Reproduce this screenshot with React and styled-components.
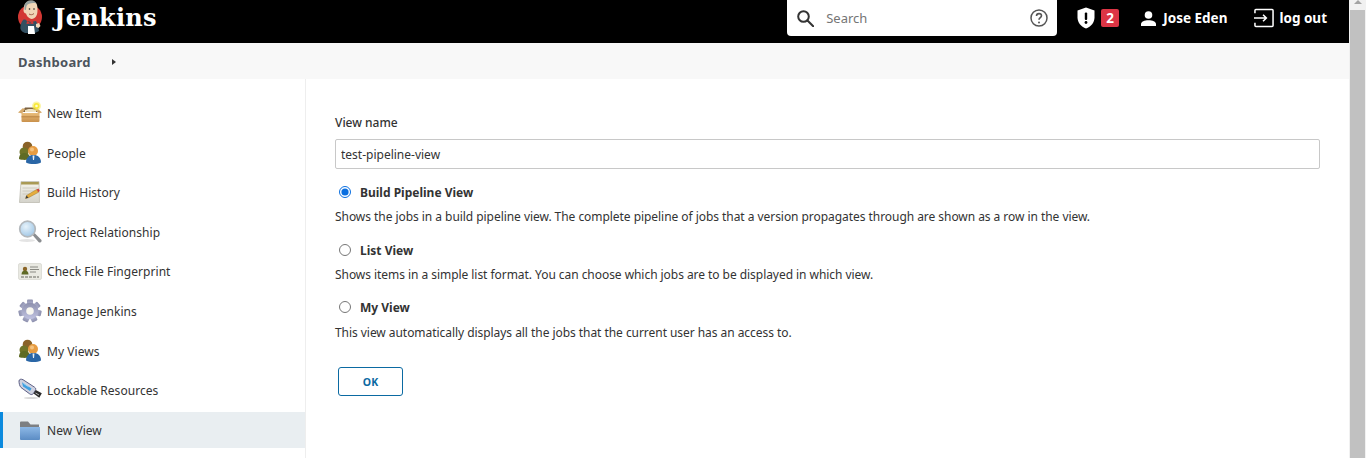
import React from 'react'
import styled, { createGlobalStyle } from 'styled-components'

const GlobalStyle = createGlobalStyle`
  html, body { margin: 0; padding: 0; height: 458px; overflow: hidden; background: #fff; }
  body { font-family: "Noto Sans", "Open Sans", sans-serif; color: #333; }
`

const Page = styled.div`
  display: flex;
  height: 458px;
  overflow: hidden;
`
const Main = styled.div`
  flex: 1;
  min-width: 0;
  display: flex;
  flex-direction: column;
`
const ScrollTrack = styled.div`
  width: 17px;
  background: #f1f1f1;
  display: flex;
  flex-direction: column;
  align-items: center;
`
const ScrollArrow = styled.div`
  width: 0;
  height: 0;
  margin: 0 0 6px;
  border-left: 4px solid transparent;
  border-right: 4px solid transparent;
  border-bottom: 4px solid #a3a3a3;
`
const ScrollThumb = styled.div`
  width: 15px;
  flex: 1;
  background: #c1c1c1;
`

const Header = styled.header`
  height: 43px;
  background: #000;
  color: #fff;
  display: flex;
  align-items: flex-start;
  padding-left: 16px;
`
const Brand = styled.a`
  display: flex;
  align-items: center;
  height: 35px;
  gap: 10px;
  margin-right: auto;
`
const BrandName = styled.span`
  font-family: "DejaVu Serif", "Liberation Serif", serif;
  font-weight: 700;
  font-size: 24px;
  letter-spacing: 0.3px;
  line-height: 35px;
`
const SearchBox = styled.div`
  width: 270px;
  height: 36px;
  background: #fff;
  border-radius: 0 0 4px 4px;
  display: flex;
  align-items: center;
  padding: 0 9px 0 10px;
  box-sizing: border-box;
  color: #333;
  margin-right: 20px;
`
const SearchText = styled.span`
  flex: 1;
  margin-left: 12px;
  font-size: 13px;
  color: #757575;
`
const HeaderItem = styled.div`
  display: flex;
  align-items: center;
  height: 36px;
  font-size: 13.5px;
  font-weight: 700;
  margin-right: ${p => p.$after}px;
  gap: ${p => p.$gap}px;
`
const Badge = styled.span`
  width: 18px;
  height: 18px;
  border-radius: 2px;
  background: #dc3545;
  color: #fff;
  font-size: 13.5px;
  font-weight: 700;
  display: flex;
  align-items: center;
  justify-content: center;
`

const Breadcrumb = styled.nav`
  height: 36px;
  box-sizing: border-box;
  background: #f8f8f8;
  display: flex;
  align-items: center;
  padding: 1px 0 0 18px;
  gap: 21px;
`
const Crumb = styled.a`
  font-size: 13px;
  font-weight: 700;
  letter-spacing: 0.3px;
  color: #4d545d;
`
const CrumbArrow = styled.span`
  width: 0;
  height: 0;
  border-top: 3.5px solid transparent;
  border-bottom: 3.5px solid transparent;
  border-left: 4px solid #333;
`

const Body = styled.div`
  flex: 1;
  display: flex;
  min-height: 0;
`
const Side = styled.aside`
  width: 305px;
  flex: none;
  border-right: 1px solid #eee;
  padding-top: 16px;
  display: flex;
  flex-direction: column;
  gap: 3.6px;
`
const SideItem = styled.a`
  height: 36px;
  flex: none;
  display: flex;
  align-items: center;
  gap: 5px;
  padding-left: ${p => (p.$active ? 15 : 18)}px;
  font-size: 12px;
  letter-spacing: 0.05px;
  color: #333;
  background: ${p => (p.$active ? '#e9eef1' : 'transparent')};
  border-left: ${p => (p.$active ? '3px solid #0b8ade' : '0')};
`
const SideLabel = styled.span`
  padding-top: 1px;
`

const Content = styled.form`
  flex: 1;
  min-width: 0;
  padding: 35px 29px 0 29px;
  display: flex;
  flex-direction: column;
`
const FieldLabel = styled.label`
  font-size: 12px;
  font-weight: 500;
  line-height: 18px;
  margin-bottom: 7px;
`
const TextInput = styled.input`
  height: 30px;
  box-sizing: border-box;
  border: 1px solid #c8c8c8;
  border-radius: 2px;
  padding: 1px 5px 0;
  font: 12px "Noto Sans", sans-serif;
  color: #333;
  outline: none;
  margin-bottom: 12px;
`
const RadioRow = styled.label`
  display: flex;
  align-items: center;
  height: 22px;
  padding-left: 4px;
  gap: 9px;
  font-size: 12px;
  font-weight: 700;
`
const Radio = styled.input`
  margin: 0;
  width: 12px;
  height: 12px;
  accent-color: #0b6fe0;
`
const Description = styled.p`
  margin: ${p => p.$before}px 0 ${p => p.$after}px;
  font-size: 12px;
  letter-spacing: -0.05px;
  line-height: 18px;
  color: #333;
`
const OkButton = styled.button`
  align-self: flex-start;
  margin: 25px 0 0 3px;
  width: 65px;
  height: 29px;
  background: #fff;
  border: 1px solid #0b6aa2;
  border-radius: 3px;
  color: #0b6aa2;
  font: 700 10.5px "Noto Sans", sans-serif;
`

const IconBox = styled.svg`
  width: 24px;
  height: 24px;
  flex: none;
`

const JenkinsLogo = () => (
  <svg width="28" height="35" viewBox="0 0 28 35">
    <circle cx="14" cy="17" r="12" fill="#d33833" />
    <path d="M8 6c1-4 4-6 8-5.500 4 .5 5.500 4 5.500 8 0 3 0 6-1.500 8-1.500 2-4 3-6 2-2-1-3.500-3-4-5-1.500 0-2.500-1.500-2.500-3S8 8 8 6z" fill="#f0d6b7" />
    <path d="M8.500 5c1-3 4-5 7.500-4.500 2 .2 3.500 1.500 4.500 3C17 2.500 12 3 10.500 6c-.3 1.500-.5 3-.5 4-.5-.3-1.200-.5-1.500-.5z" fill="#49728b" opacity=".55" />
    <path d="M7 20c2-1 3 0 4 1l4 1 5-1 2 4 1 6-4 2H9c-2-1-4-2-4.500-4S5 22 7 20z" fill="#335061" />
    <path d="M11 21l3 2 3-2 .5 3-3.500-.5-3.500.5z" fill="#d33833" />
    <path d="M12 26h6l1 8h-7z" fill="#fff" />
    <path d="M20 24l3-1 1.500 3-2 2-2.500-1z" fill="#f0d6b7" />
    <path d="M13 14c1.500 1 3.500 1 5-.5" stroke="#a0604a" strokeWidth="1" fill="none" />
    <circle cx="13.500" cy="9" r=".8" fill="#222" />
    <circle cx="18" cy="9" r=".8" fill="#222" />
  </svg>
)

const SearchIcon = () => (
  <svg width="17" height="17" viewBox="0 0 17 17" fill="none" stroke="#333" strokeWidth="2">
    <circle cx="6.500" cy="6.500" r="5.300" />
    <path d="M10.500 10.500l5.700 5.700" strokeLinecap="round" />
  </svg>
)

const HelpIcon = () => (
  <svg width="18" height="18" viewBox="0 0 18 18" fill="none" stroke="#555" strokeWidth="1.500">
    <circle cx="9" cy="9" r="8" />
    <path d="M6.500 7c0-1.500 1.100-2.400 2.500-2.400s2.500.9 2.500 2.200c0 1.800-2.500 1.900-2.500 4" strokeWidth="1.600" />
    <circle cx="9" cy="13.500" r="1" fill="#555" stroke="none" />
  </svg>
)

const ShieldIcon = () => (
  <svg width="18" height="22" viewBox="0 0 18 22">
    <path d="M9 .5l8.500 3v7c0 5-3.500 9-8.500 11C4 19.500.500 15.500.500 10.500v-7z" fill="#fff" />
    <rect x="7.800" y="5.500" width="2.400" height="7.500" rx="1" fill="#000" />
    <circle cx="9" cy="15.500" r="1.400" fill="#000" />
  </svg>
)

const PersonIcon = () => (
  <svg width="15" height="15" viewBox="0 0 15 15" fill="#fff">
    <circle cx="7.500" cy="4" r="3.800" />
    <path d="M0 15v-2c0-2.500 3.500-3.800 7.500-3.800S15 10.500 15 13v2z" />
  </svg>
)

const LogoutIcon = () => (
  <svg width="20" height="20" viewBox="0 0 21 20" fill="none" stroke="#fff" strokeWidth="1.600">
    <path d="M1 5V2a1 1 0 0 1 1-1h17a1 1 0 0 1 1 1v16a1 1 0 0 1-1 1H2a1 1 0 0 1-1-1v-3" />
    <path d="M0 10h13M9.500 6.500L13 10l-3.500 3.500" />
  </svg>
)

const BoxIcon = () => (
  <IconBox viewBox="0 0 24 24">
    <defs>
      <linearGradient id="boxFront" x1="0" y1="0" x2="0" y2="1">
        <stop offset="0" stopColor="#e9bd7c" />
        <stop offset="1" stopColor="#c9914b" />
      </linearGradient>
    </defs>
    <path d="M4 11l3-4.500h11l3 4.500z" fill="#7d6240" />
    <path d="M7 9c3-1.500 8-1.500 11 0v2H7z" fill="#efe3c4" />
    <path d="M3.500 12h18v8a1 1 0 0 1-1 1h-16a1 1 0 0 1-1-1z" fill="url(#boxFront)" />
    <path d="M0 11.500L5 7l2 1.500L4 12.500z" fill="#d7aa6a" />
    <path d="M24 11.500L19 7l-2 1.500L20.500 12.500z" fill="#d7aa6a" />
    <path d="M3.500 15h18v1.500h-18z" fill="#b98443" opacity=".7" />
    <circle cx="18.500" cy="5" r="4.500" fill="#f9ec5d" opacity=".55" />
    <circle cx="18.500" cy="5" r="3" fill="#f8e93a" />
    <circle cx="18.500" cy="5" r="1.300" fill="#fffbd0" />
  </IconBox>
)

const PeopleIcon = () => (
  <IconBox viewBox="0 0 24 24">
    <circle cx="9.500" cy="5.500" r="4.800" fill="#8a6228" />
    <circle cx="6" cy="11" r="4.500" fill="#6f7428" />
    <path d="M1 18c0-4 2-6 5.500-6s5.500 2 5.500 6c-3 1.200-8 1.200-11 0z" fill="#5f6b24" />
    <circle cx="15" cy="10" r="5" fill="#e79c42" />
    <circle cx="14" cy="8.500" r="2" fill="#f4c27e" />
    <path d="M8 21.500c0-5 3-7.500 7.500-7.500s7.500 2.500 7.500 7.500c-4 2-11 2-15 0z" fill="#2a66a6" />
    <path d="M14.500 14.500h2l-.5 4.500h-1z" fill="#e9eef3" />
  </IconBox>
)

const NotepadIcon = () => (
  <IconBox viewBox="0 0 24 24">
    <defs>
      <linearGradient id="padFace" x1="0" y1="0" x2="0" y2="1">
        <stop offset="0" stopColor="#f6f5ee" />
        <stop offset="1" stopColor="#d4d3cb" />
      </linearGradient>
    </defs>
    <path d="M3 1.500h18l.5 21h-20z" fill="url(#padFace)" stroke="#b8b6aa" strokeWidth=".7" />
    <path d="M3.200 2h17.600v2.600H3z" fill="#a99a55" />
    <path d="M4.500 8h15M4.500 11h15M4.500 14h8" stroke="#c6c4b8" strokeWidth=".8" />
    <path d="M7.500 18.500l1-3L18.500 9.500l2 2.800-10 5.400z" fill="#e6ad3e" stroke="#8a6a22" strokeWidth=".4" />
    <path d="M18.500 9.500l2-1 1.200 2.200-1.200 1.600z" fill="#cf3f38" />
    <path d="M7.500 18.500l1-3 2 2.200z" fill="#3d3d3d" />
  </IconBox>
)

const MagnifierIcon = () => (
  <IconBox viewBox="0 0 24 24">
    <defs>
      <radialGradient id="lens" cx=".4" cy=".35" r=".8">
        <stop offset="0" stopColor="#e7f3fb" />
        <stop offset="1" stopColor="#94bfe2" />
      </radialGradient>
    </defs>
    <path d="M14.500 15l2-2 6.500 6.500a1.500 1.500 0 0 1-2.500 2.500z" fill="#8a8d90" />
    <circle cx="9.500" cy="9" r="7.800" fill="url(#lens)" stroke="#b3b8bc" strokeWidth="1.700" />
    <ellipse cx="9" cy="20.500" rx="8" ry="1.500" fill="#e4e4e4" />
  </IconBox>
)

const FingerprintIcon = () => (
  <IconBox viewBox="0 0 24 24">
    <rect x="0.500" y="4.500" width="23" height="16" rx="1.500" fill="#e9e9e2" stroke="#cfcfc8" strokeWidth=".6" />
    <circle cx="7" cy="10" r="2.200" fill="#8a6426" />
    <path d="M3.500 15.500c0-2.500 1.500-4 3.500-4s3.500 1.500 3.500 4z" fill="#5f6a26" />
    <path d="M12 8h8M12 10.500h9M12 13h6" stroke="#7f7f78" strokeWidth=".9" />
    <path d="M3 18h18" stroke="#66665f" strokeWidth="1" strokeDasharray="3 1" />
  </IconBox>
)

const GearIcon = () => (
  <IconBox viewBox="0 0 24 24">
    <defs>
      <linearGradient id="gearFace" x1="0" y1="0" x2="0" y2="1">
        <stop offset="0" stopColor="#8d90ad" />
        <stop offset="1" stopColor="#c1c3e2" />
      </linearGradient>
    </defs>
    <g fill="url(#gearFace)">
      {[0, 51, 103, 154, 206, 257, 309].map(a => (
        <rect key={a} x="9" y="0.500" width="6" height="7" rx="1" transform={`rotate(${a} 12 12)`} />
      ))}
    </g>
    <circle cx="12" cy="12" r="8.300" fill="url(#gearFace)" />
    <circle cx="12" cy="12" r="3.800" fill="#f8f7f0" />
  </IconBox>
)

const UsbIcon = () => (
  <IconBox viewBox="0 0 24 24">
    <path d="M1 3c0-1.700 2-2.300 4-1.300l11.500 7.500c1.500 1 1.500 2 .8 3.300l-1.800 2.800c-1 1.600-2.300 1.600-3.800.6L3 9.500C1.500 8 1 5 1 3z" fill="#cfd2e0" stroke="#4d4f78" strokeWidth=".9" />
    <path d="M4 4.200l9.500 6.300-1.500 2.500L5 8.500z" fill="#3f9fe0" />
    <path d="M5.500 5.500l5 3.200" stroke="#a8dcf7" strokeWidth=".8" />
    <path d="M15.500 15.500l2.300-3.500 6 3.300-2.500 4.400z" fill="#2b2b2b" />
    <path d="M17.500 15l3.500 2" stroke="#ddd" strokeWidth=".8" />
    <ellipse cx="13" cy="20" rx="7" ry="1" fill="#d9d9d9" />
  </IconBox>
)

const FolderIcon = () => (
  <IconBox viewBox="0 0 24 24">
    <defs>
      <linearGradient id="folderFace" x1="0" y1="0" x2="0" y2="1">
        <stop offset="0" stopColor="#8db8e6" />
        <stop offset="1" stopColor="#5b8cc4" />
      </linearGradient>
    </defs>
    <path d="M2 4.500a1 1 0 0 1 1-1h7l2.500 3H21v5H2z" fill="#7d7f82" />
    <path d="M2 9h20v12a1 1 0 0 1-1 1H3a1 1 0 0 1-1-1z" fill="url(#folderFace)" />
  </IconBox>
)

const items = [
  ['New Item', BoxIcon],
  ['People', PeopleIcon],
  ['Build History', NotepadIcon],
  ['Project Relationship', MagnifierIcon],
  ['Check File Fingerprint', FingerprintIcon],
  ['Manage Jenkins', GearIcon],
  ['My Views', PeopleIcon],
  ['Lockable Resources', UsbIcon],
  ['New View', FolderIcon],
]

const App = () => (
  <Page>
    <GlobalStyle />
    <Main>
      <Header>
        <Brand>
          <JenkinsLogo />
          <BrandName>Jenkins</BrandName>
        </Brand>
        <SearchBox>
          <SearchIcon />
          <SearchText>Search</SearchText>
          <HelpIcon />
        </SearchBox>
        <HeaderItem $after={22} $gap={6}>
          <ShieldIcon />
          <Badge>2</Badge>
        </HeaderItem>
        <HeaderItem $after={27} $gap={7}>
          <PersonIcon />
          Jose Eden
        </HeaderItem>
        <HeaderItem $after={22} $gap={5}>
          <LogoutIcon />
          log out
        </HeaderItem>
      </Header>
      <Breadcrumb>
        <Crumb>Dashboard</Crumb>
        <CrumbArrow />
      </Breadcrumb>
      <Body>
        <Side>
          {items.map(([label, Icon]) => (
            <SideItem key={label} $active={label === 'New View'}>
              <Icon />
              <SideLabel>{label}</SideLabel>
            </SideItem>
          ))}
        </Side>
        <Content onSubmit={e => e.preventDefault()}>
          <FieldLabel>View name</FieldLabel>
          <TextInput defaultValue="test-pipeline-view" />
          <RadioRow>
            <Radio type="radio" name="mode" defaultChecked />
            Build Pipeline View
          </RadioRow>
          <Description $before={5} $after={13}>
            Shows the jobs in a build pipeline view. The complete pipeline of jobs that a version propagates through are shown as a row in the view.
          </Description>
          <RadioRow>
            <Radio type="radio" name="mode" />
            List View
          </RadioRow>
          <Description $before={5} $after={12}>
            Shows items in a simple list format. You can choose which jobs are to be displayed in which view.
          </Description>
          <RadioRow>
            <Radio type="radio" name="mode" />
            My View
          </RadioRow>
          <Description $before={6} $after={0}>
            This view automatically displays all the jobs that the current user has an access to.
          </Description>
          <OkButton type="submit">OK</OkButton>
        </Content>
      </Body>
    </Main>
    <ScrollTrack>
      <ScrollArrow />
      <ScrollThumb />
    </ScrollTrack>
  </Page>
)

export default App
